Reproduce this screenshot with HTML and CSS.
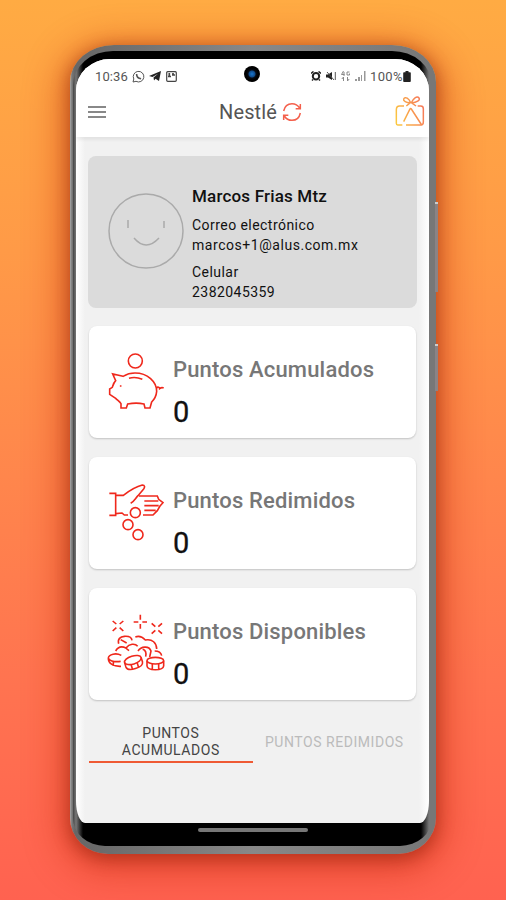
FILE: index.html
```html
<!DOCTYPE html>
<html lang="es">
<head>
  <meta charset="UTF-8" />
  <meta name="viewport" content="width=device-width, initial-scale=1.0"/>
  <title>Nestlé - Puntos</title>
  <link rel="stylesheet" href="styles.css">
</head>
<body>

  <div class="phone">
    <span class="side-button volume"></span>
    <span class="side-button power"></span>

    <div class="bezel">
      <div class="screen">
        <span class="camera"></span>

        <!-- Status bar -->
        <div class="status-bar">
          <div class="status-group">
            <span class="time">10:36</span>
            <svg width="13" height="13" viewBox="0 0 13 13" fill="none" stroke="#555">
              <path d="M1 12l.8-3A5.3 5.3 0 1 1 4 11.300z"/>
              <path d="M4.600 4c0 2.500 2 4.500 4.500 4.800" stroke-width="1.600"/>
            </svg>
            <svg width="12" height="12" viewBox="0 0 12 12" fill="#222">
              <path d="M0 6L12 1 10 11 6.500 8.700 5 10.500 4.500 7.500 9 3.700 3.500 7z"/>
            </svg>
            <svg class="picture" width="11" height="11" viewBox="0 0 11 11" fill="none" stroke="#444" stroke-width="1.200">
              <rect x=".7" y=".7" width="9.600" height="9.600" rx="1"/>
              <path d="M3.300 2v4M7 2v2.500M2 5.500h3M6 4h3" stroke-width="1.700"/>
            </svg>
          </div>
          <div class="status-group right">
            <svg width="10" height="10" viewBox="0 0 10 10" fill="none" stroke="#222">
              <circle cx="5" cy="5.200" r="3.200" stroke-width="2"/>
              <path d="M0 2.500L2.500.5M10 2.500L7.500.5M1 9.500l1-1M9 9.500l-1-1" stroke-width="1.500"/>
            </svg>
            <svg width="10" height="10" viewBox="0 0 10 10" fill="#222">
              <path d="M0 3.500h2L6 1v8L2 6.500H0z"/>
              <path d="M1 1l7 8M9.300 1v8" stroke="#555"/>
            </svg>
            <svg width="9" height="11" viewBox="0 0 9 11" fill="none" stroke="#888">
              <path d="M2.500 0L.5 3.500h3M3 1v4M8.500 1H6v3h2.500V2.500M2.500 10V6M.8 8l1.700-2M6.500 6v4M8.200 8l-1.700 2"/>
            </svg>
            <svg width="11" height="10" viewBox="0 0 11 10" fill="#999">
              <path d="M0 8h2v2H0zM3 6h2v4H3zM6 4h1v6H6zM9 0h1.500v10H9z"/>
            </svg>
            <span class="battery-text">100%</span>
            <svg width="8" height="11" viewBox="0 0 8 11" fill="#222">
              <path d="M2.500 0h3v1.300H7q.8 0 .8.800V10q0 1-.8 1H1q-.8 0-.8-1V2.100q0-.8.800-.8h1.500z"/>
            </svg>
          </div>
        </div>

        <!-- App header -->
        <header class="app-header">
          <button class="menu" aria-label="Menú"><i></i><i></i><i></i></button>
          <h1>
            Nestlé
            <svg width="20" height="20" viewBox="0 0 60 60" fill="none" stroke="#f4604c" stroke-width="4.500">
              <path d="M5 27C8 12 18 5 30 5c11 0 18 5 23 13M55 6v14H41"/>
              <path d="M55 33C52 48 42 55 30 55c-11 0-18-5-23-13M5 54V40h14"/>
            </svg>
          </h1>
          <svg class="gift" width="30" height="32" viewBox="0 0 90 96" fill="none" stroke="url(#giftFill)" stroke-width="4.500">
            <defs>
              <linearGradient id="giftFill" gradientUnits="userSpaceOnUse" x1="0" y1="70" x2="88" y2="40">
                <stop offset="0" stop-color="#fbc840"/>
                <stop offset="1" stop-color="#f6785a"/>
              </linearGradient>
            </defs>
            <path d="M22 90H8q-4 0-4-5V44q0-11 10-11h13M68 33h9q8 0 8 8v40q0 9-7 9H33"/>
            <path d="M26 80l19-38q2-3 4 0l31 48"/>
            <path d="M45 23C34 23 24 18 26 12 31 3 42 11 47 23M49 23C54 11 66 1 72 9c5 7-9 14-20 14M47 22L34 33M48 22l15 11"/>
          </svg>
        </header>

        <main class="content">
          <section class="profile">
            <svg class="avatar" width="76" height="76" viewBox="0 0 76 76" fill="none" stroke="#aaa" stroke-width="1.500">
              <circle cx="38" cy="38" r="37"/>
              <path d="M20 27v8M56 28v7M26 45q12 14 25 0"/>
            </svg>
            <div class="profile-info">
              <h2>Marcos Frias Mtz</h2>
              <p>Correo electrónico<br><span class="email">marcos+1@alus.com.mx</span></p>
              <p>Celular<br>2382045359</p>
            </div>
          </section>

          <section class="card">
            <svg class="card-icon" viewBox="81 93 174 180">
              <circle cx="166" cy="123" r="21"/>
              <path d="M129 169L98 162l9 20c-6 6-8 14-10 20l-8 5v16l18 12c7 7 12 10 16 16v13h16l4-12q26-5 49 0l3 12h15l5-18c8-8 14-20 15-32 0-28-27-55-65-55-14 0-26 4-36 10z"/>
              <path d="M147 175q19-6 40 3M122 196v4M230 204c3-5 9-1 9 2q6-5 12-2"/>
            </svg>
            <div class="card-text">
              <h3>Puntos Acumulados</h3>
              <strong>0</strong>
            </div>
          </section>

          <section class="card">
            <svg class="card-icon" viewBox="81 99 174 180">
              <path d="M88 133h19v66H88M107 139h23c18-14 33-25 57-31 8 0 8 7 4 12l-17 20c-8 8-12 18-22 23"/>
              <path d="M177 141h55l4 10 13 10-9 10-8 14-13 13h-30M193 156h42M193 170h43M193 184h34M107 194l19-2 7 6h11"/>
              <circle cx="166" cy="191" r="15"/>
              <circle cx="144" cy="227" r="15"/>
              <circle cx="174" cy="257" r="15"/>
            </svg>
            <div class="card-text">
              <h3>Puntos Redimidos</h3>
              <strong>0</strong>
            </div>
          </section>

          <section class="card">
            <svg class="card-icon" viewBox="81 102 174 180">
              <path d="M181 107v15M181 135v14M161 129h14M187 129h14"/>
              <path d="M98 126l11 9M130 126l-11 9M98 156l11-10M130 156l-11-10M215 133l11 10M246 133l-11 10M215 164l11-10M246 164l-11-10"/>
              <path d="M116 194c-4-14 5-21 17-22 13-1 22 3 23 12M122 182l18 10M166 174q16-6 30 9c21-4 34 9 34 27M107 216c7-13 19-15 31-9 10-13 27-15 35-5M137 207l10 8M174 216c9-14 33-17 39 0l-4 18M188 211q13 4 9 22M224 216q18 0 21 14"/>
              <path d="M124 229c-15-8-38-4-39 8-1 17 16 26 38 25M86 239c7 9 20 10 36 8M100 246v15"/>
              <g transform="rotate(-17 160 248)">
                <ellipse cx="160" cy="243" rx="26" ry="12"/>
                <path d="M134 243v14c2 17 50 17 52 0v-14M151 254v16M170 254v16"/>
              </g>
              <ellipse cx="226" cy="245" rx="25" ry="10"/>
              <path d="M201 245v16c2 15 48 15 50 0v-16M217 255v17M236 255v17"/>
            </svg>
            <div class="card-text">
              <h3>Puntos Disponibles</h3>
              <strong>0</strong>
            </div>
          </section>

          <nav class="tabs">
            <a class="tab active">PUNTOS ACUMULADOS</a>
            <a class="tab">PUNTOS REDIMIDOS</a>
          </nav>
        </main>
      </div>

      <div class="nav-bar"><span></span></div>
    </div>
  </div>

</body>
</html>
```
FILE: styles.css
```css
* {
  box-sizing: border-box;
}

body {
  margin: 0;
  height: 900px;
  overflow: hidden;
  padding: 45px 0 0 70px;
  font-family: Roboto, 'Liberation Sans', sans-serif;
  background: linear-gradient(180deg, #ffab43 0%, #ff9a47 28%, #ff8a4b 48%, #ff7450 75%, #ff6250 100%);
}

h1, h2, h3, p {
  margin: 0;
}

svg {
  display: block;
  flex-shrink: 0;
}

.phone {
  position: relative;
  width: 366px;
  height: 809px;
  padding: 6px 4px 8px 3px;
  border-radius: 44px 44px 38px 38px / 37px 37px 36px 36px;
  background: linear-gradient(90deg, #aaa 0, #777 2px, #666 5px, #888 50%, #777 362px, #777 366px);
  box-shadow: 0 4px 16px 2px rgba(120, 20, 0, 0.4), 0 8px 36px 10px rgba(190, 30, 0, 0.42);
}

.side-button {
  position: absolute;
  right: -2px;
  width: 3px;
  background: #8b8385;
  border-top: 2px solid #ccc;
}

.side-button.volume {
  top: 157px;
  height: 90px;
}

.side-button.power {
  top: 299px;
  height: 47px;
}

.bezel {
  height: 795px;
  padding: 8px 3px 0;
  border-radius: 40px 40px 32px 32px / 34px 34px 28px 28px;
  background: linear-gradient(90deg, #444 0, #777 3px, #000 10px, #000 348px, #777 356px, #777 100%);
}

.screen {
  position: relative;
  height: 764px;
  border-radius: 34px 34px 9px 9px / 32px 32px 22px 22px;
  overflow: hidden;
  background: linear-gradient(90deg, #fff 0, #f1f1f1 9px, #f1f1f1 343px, #fff 100%);
}

.camera {
  position: absolute;
  top: 7px;
  left: 168px;
  width: 16px;
  height: 16px;
  border-radius: 50%;
  background: radial-gradient(circle, #1878d0 0, #0f4a8a 3px, #050b14 4px, #000 6px);
}

.status-bar {
  height: 34px;
  padding: 0 18px 0 19px;
  display: flex;
  justify-content: space-between;
  align-items: center;
  background: #fff;
  color: #555;
  font-size: 13px;
}

.status-group {
  display: flex;
  align-items: center;
  gap: 4px;
}

.time {
  letter-spacing: 0.1px;
}

.picture {
  margin-left: 1px;
}

.status-group.right {
  gap: 5px;
}

.battery-text {
  letter-spacing: 0.4px;
  margin: 0 -5px 0 -1px;
}

.app-header {
  height: 44px;
  padding: 0 4px 6px 12px;
  display: flex;
  align-items: center;
  justify-content: space-between;
  background: #fff;
  box-shadow: 0 3px 3px rgba(0, 0, 0, 0.06);
}

.menu {
  width: 30px;
  padding: 0;
  border: none;
  background: none;
  display: flex;
  flex-direction: column;
  gap: 3px;
}

.menu i {
  width: 18px;
  height: 2px;
  background: #888;
}

.app-header h1 {
  display: flex;
  align-items: center;
  gap: 5px;
  margin-left: 8px;
  font-size: 20px;
  font-weight: 400;
  letter-spacing: 0.1px;
  color: #555;
}

.gift {
  margin-bottom: 3px;
}

.content {
  padding: 19px 12px 0;
}

.profile {
  display: flex;
  height: 152px;
  padding: 29px 0 0 20px;
  border-radius: 8px;
  background: #dbdbdb;
}

.avatar {
  margin-top: 8px;
}

.profile-info {
  margin-left: 8px;
  font-size: 14px;
  line-height: 19.5px;
  letter-spacing: 0.45px;
  color: #111;
}

.profile-info h2 {
  font-size: 17px;
  font-weight: 500;
  line-height: 23px;
  letter-spacing: 0.18px;
  margin-bottom: 8px;
}

.profile-info p {
  margin-bottom: 8px;
}

.profile-info .email {
  letter-spacing: 0.54px;
}

.card {
  display: flex;
  height: 112px;
  margin: 18px 1px 0;
  padding-left: 18px;
  border-radius: 8px;
  background: #fff;
  box-shadow: 0 1px 2px rgba(0, 0, 0, 0.2);
}

.card + .card {
  margin-top: 19px;
}

.card-icon {
  width: 58px;
  height: 60px;
  margin-top: 25px;
  fill: none;
  stroke: #ef281c;
  stroke-width: 4.8;
}

.card-text {
  margin: 30px 0 0 8px;
}

.card-text h3 {
  font-size: 22px;
  font-weight: 500;
  line-height: 28px;
  letter-spacing: 0.17px;
  color: #777;
}

.card-text strong {
  display: block;
  margin-top: 11px;
  font-size: 29px;
  font-weight: 400;
  line-height: 34px;
  color: #111;
  -webkit-text-stroke: 0.3px #111;
}

.tabs {
  display: flex;
  margin: 21px 1px 0;
}

.tab {
  width: 164px;
  height: 42px;
  display: flex;
  align-items: center;
  justify-content: center;
  text-align: center;
  font-size: 14px;
  line-height: 17px;
  letter-spacing: 0.55px;
  color: #bbb;
}

.tab.active {
  padding: 2px 28px 0;
  color: #444;
  border-bottom: 2px solid #ef5a34;
}

.nav-bar {
  display: flex;
  justify-content: center;
  padding-top: 5px;
}

.nav-bar span {
  width: 110px;
  height: 4px;
  border-radius: 2px;
  background: #777;
}
```
